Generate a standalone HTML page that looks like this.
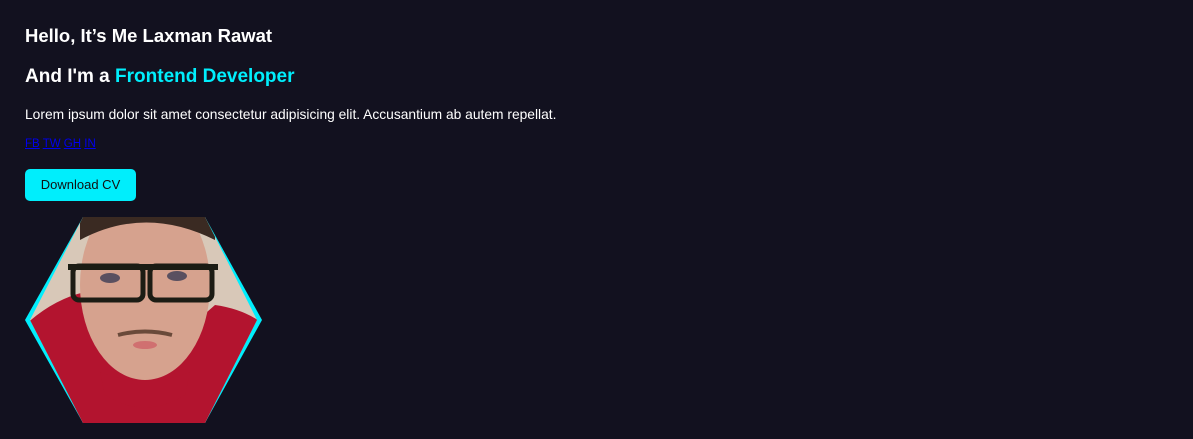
<!DOCTYPE html>
<html><head><style>
html,body{margin:0;padding:0;}
body{width:1193px;height:439px;background:#12111f;font-family:"Liberation Sans",sans-serif;color:#fff;position:relative;overflow:hidden;}
.a{position:absolute;left:25px;white-space:nowrap;}
h1{margin:0;font-size:18.5px;font-weight:bold;top:25px;}
h2{margin:0;font-size:19px;font-weight:bold;top:66px;}
h2 span{color:#00eefc;}
p{margin:0;font-size:13.8px;top:107px;}
.l{top:138px;font-size:11.5px;}
.l a{color:#0000ee;text-decoration:underline;}
.btn{top:169px;width:111px;height:32px;background:#00eefc;border-radius:5px;color:#111;font-size:13px;text-align:center;line-height:32px;}
svg{position:absolute;left:0;top:0;}
</style></head><body>
<h1 class="a">Hello, It’s Me Laxman Rawat</h1>
<h2 class="a">And I'm a <span>Frontend Developer</span></h2>
<p class="a">Lorem ipsum dolor sit amet consectetur adipisicing elit. Accusantium ab autem repellat.</p>
<div class="a l"><a>FB</a> <a>TW</a> <a>GH</a> <a>IN</a></div>
<div class="a btn">Download CV</div>
<svg width="300" height="439">
<defs><clipPath id="h"><polygon points="83,217 205,217 257,320 205,423 83,423 30,320"/></clipPath></defs>
<polygon points="83,217 205,217 262,320 205,423 83,423 25,320" fill="#00eefc"/>
<g clip-path="url(#h)">
<rect x="0" y="200" width="300" height="240" fill="#d8c8b8"/>
<path d="M20 330 Q50 300 85 292 L120 340 L175 340 L215 305 Q250 310 270 330 L270 440 L20 440Z" fill="#b3142f"/>
<ellipse cx="145" cy="285" rx="65" ry="95" fill="#d6a28e"/>
<path d="M80 240 Q145 205 215 240 L215 210 L80 210Z" fill="#3a2a22"/>
<path d="M100 372 Q145 390 190 372 L185 395 Q145 420 105 395Z" fill="#b3142f"/>
<rect x="73" y="266" width="70" height="34" rx="6" fill="none" stroke="#1c1c14" stroke-width="5"/>
<rect x="150" y="266" width="62" height="34" rx="6" fill="none" stroke="#1c1c14" stroke-width="5"/>
<rect x="68" y="264" width="150" height="6" fill="#1c1c14"/>
<ellipse cx="110" cy="278" rx="10" ry="5" fill="#5a5060"/>
<ellipse cx="177" cy="276" rx="10" ry="5" fill="#5a5060"/>
<path d="M118 335 Q145 328 172 335" stroke="#6a4a3a" stroke-width="4" fill="none"/>
<ellipse cx="145" cy="345" rx="12" ry="4" fill="#d07070"/>
</g>
</svg>
</body></html>
